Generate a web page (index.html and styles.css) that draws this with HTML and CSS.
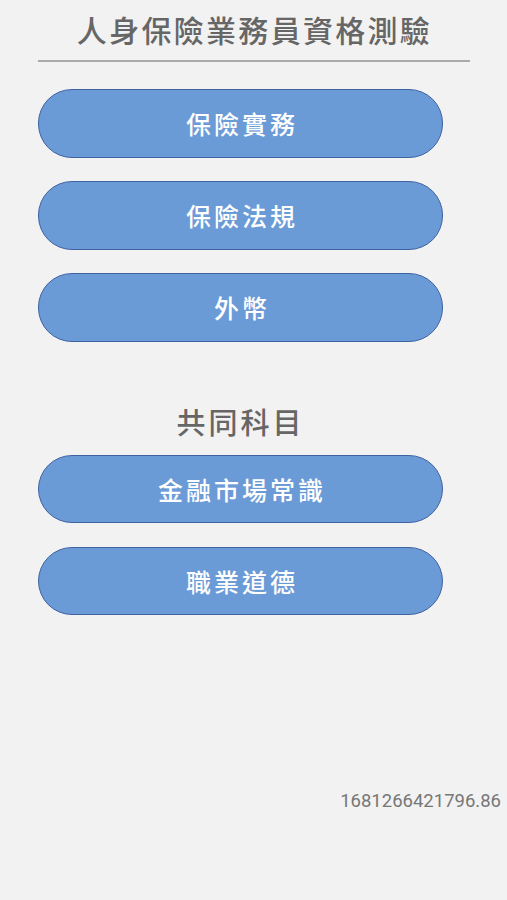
FILE: index.html
```html
<!DOCTYPE html>
<html lang="zh-Hant">
<head>
  <meta charset="UTF-8">
  <title>人身保險業務員資格測驗</title>
  <link rel="stylesheet" href="styles.css">
</head>
<body>
<div class="page">
  <h1 class="title">人身保險業務員資格測驗</h1>
  <hr class="rule">

  <div class="menu">
    <button class="pill">保險實務</button>
    <button class="pill">保險法規</button>
    <button class="pill">外幣</button>
  </div>

  <h2 class="section">共同科目</h2>

  <div class="menu">
    <button class="pill">金融市場常識</button>
    <button class="pill">職業道德</button>
  </div>

  <div class="stamp">1681266421796.86</div>
</div>
</body>
</html>
```

FILE: styles.css
```css
html, body { margin: 0; background: #f2f2f2; }
body { font-family: "Noto Sans CJK TC", "Noto Sans", sans-serif; }
.page { width: 507px; height: 900px; display: flex; flex-direction: column; }
.title { margin: 9px 0 0; padding-left: 2px; text-align: center; font-size: 30px; font-weight: 500; color: #666; line-height: 40px; letter-spacing: 2.3px; }
.rule { margin: 11px 37px 0 38px; border: none; height: 2px; background: #aaa; }
.menu { display: flex; flex-direction: column; gap: 23.5px; padding: 0 64px 0 38px; margin-top: 27px; }
.pill { height: 68.5px; border-radius: 34px; background: #6b9bd6; border: 1.5px solid #3f62a3; color: #fff; font-family: inherit; font-size: 25px; font-weight: 500; letter-spacing: 3px; padding: 0 0 0 3px; }
.section { margin: 60px 0 0; padding-right: 26px; text-align: center; font-size: 29px; font-weight: 500; color: #666; line-height: 38px; letter-spacing: 3px; }
.section + .menu { margin-top: 15px; }
.stamp { margin-top: auto; margin-bottom: 88px; text-align: right; padding-right: 6px; font-family: Roboto, sans-serif; font-size: 18.5px; color: #777; }
```
